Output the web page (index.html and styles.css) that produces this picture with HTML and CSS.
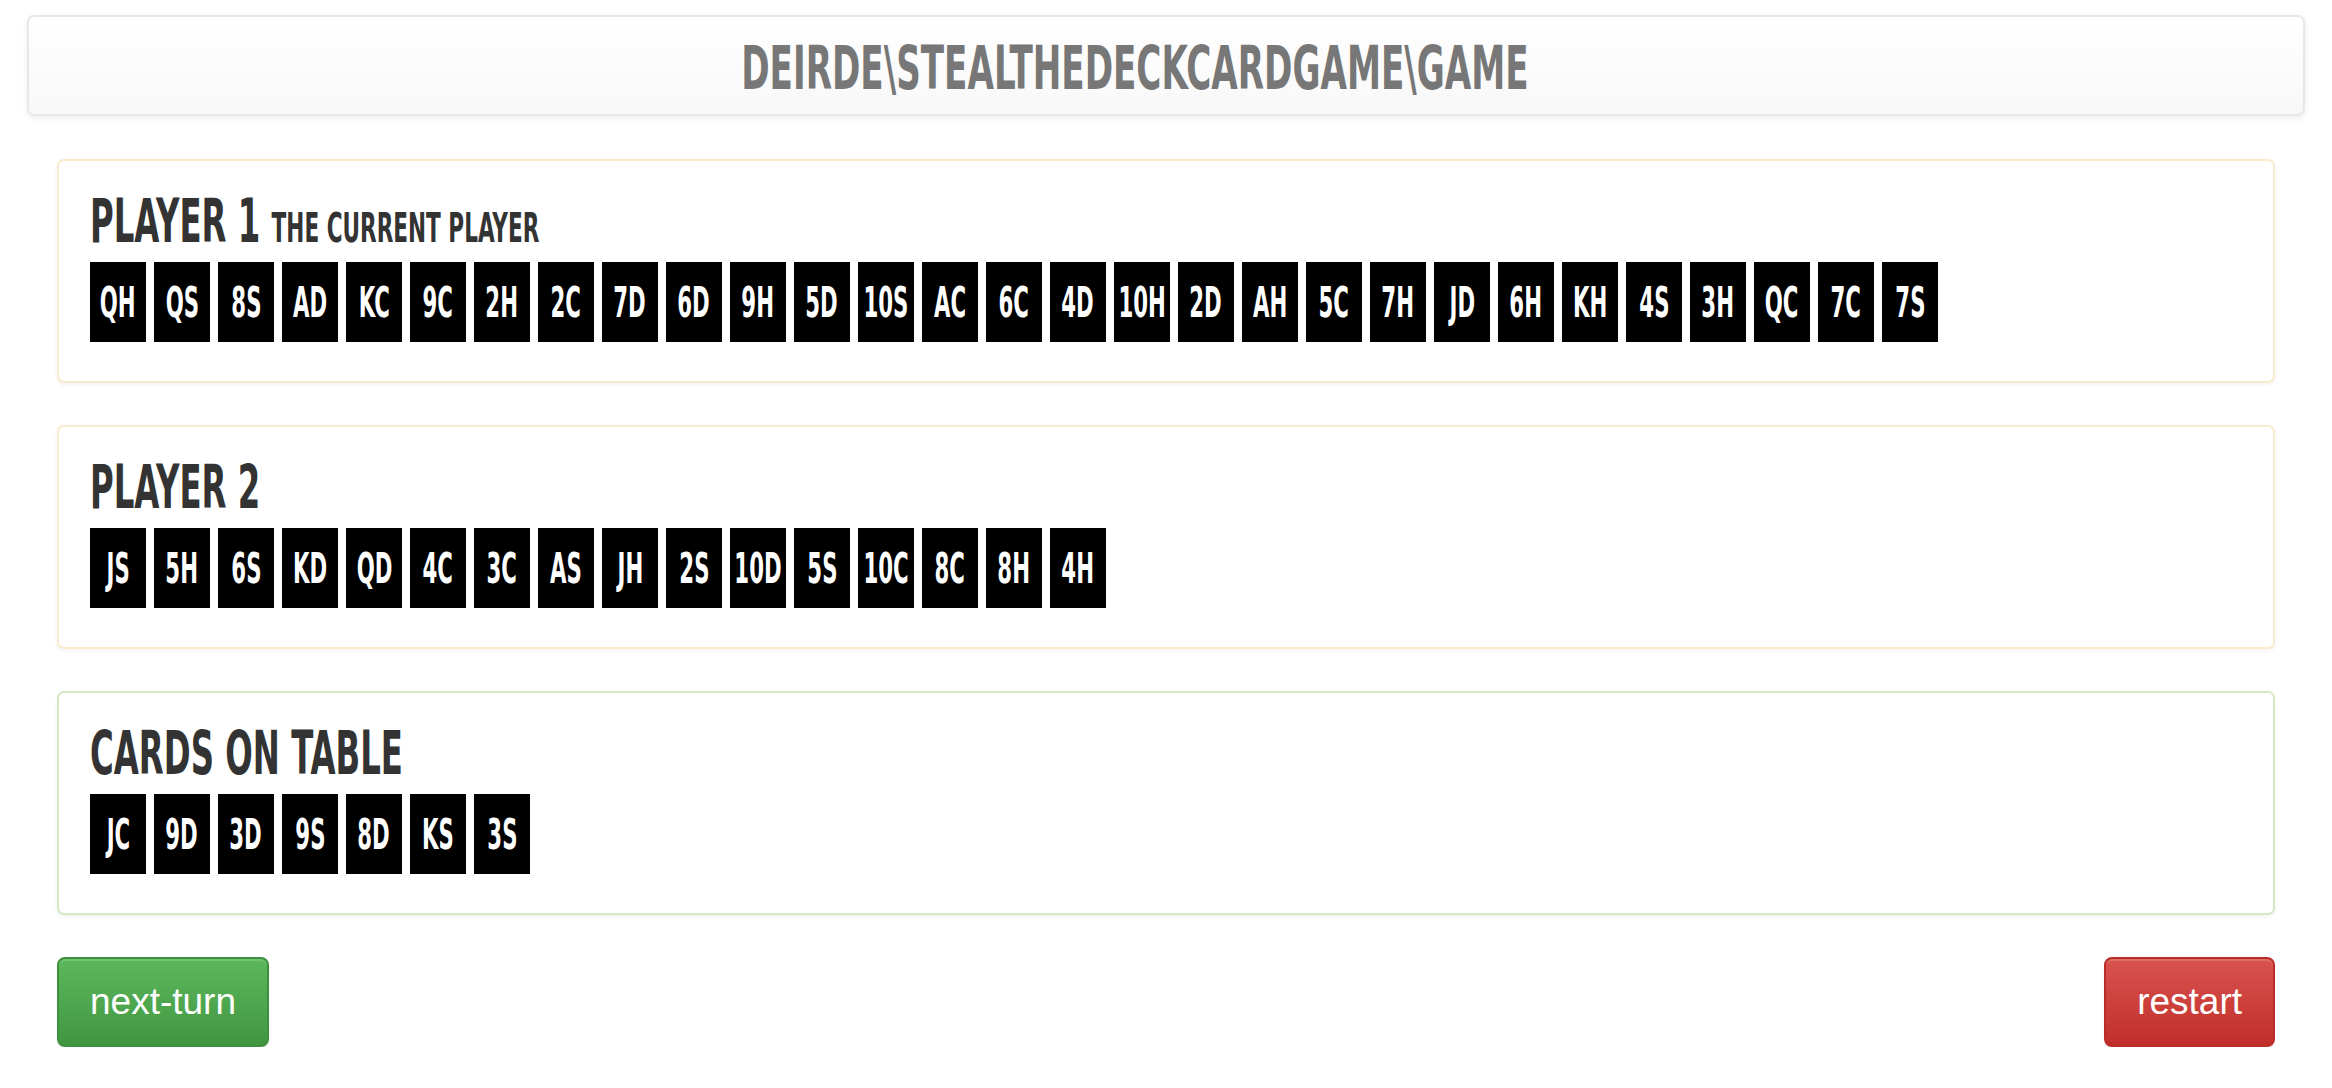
FILE: index.html
```html
<!DOCTYPE html>
<html>
<head>
<meta charset="utf-8">
<title>Steal the deck</title>
<link rel="stylesheet" href="styles.css">
</head>
<body>
<div class="navbar"><span class="brand">DEIRDE\STEALTHEDECKCARDGAME\GAME</span></div>
<div class="main">
  <div class="panel panel-warning">
    <h2 class="ptitle"><span class="cond">PLAYER 1 <small>THE CURRENT PLAYER</small></span></h2>
    <div class="cards">
      <div class="card"><span>QH</span></div><div class="card"><span>QS</span></div><div class="card"><span>8S</span></div><div class="card"><span>AD</span></div><div class="card"><span>KC</span></div><div class="card"><span>9C</span></div><div class="card"><span>2H</span></div><div class="card"><span>2C</span></div><div class="card"><span>7D</span></div><div class="card"><span>6D</span></div><div class="card"><span>9H</span></div><div class="card"><span>5D</span></div><div class="card"><span>10S</span></div><div class="card"><span>AC</span></div><div class="card"><span>6C</span></div><div class="card"><span>4D</span></div><div class="card"><span>10H</span></div><div class="card"><span>2D</span></div><div class="card"><span>AH</span></div><div class="card"><span>5C</span></div><div class="card"><span>7H</span></div><div class="card"><span>JD</span></div><div class="card"><span>6H</span></div><div class="card"><span>KH</span></div><div class="card"><span>4S</span></div><div class="card"><span>3H</span></div><div class="card"><span>QC</span></div><div class="card"><span>7C</span></div><div class="card"><span>7S</span></div>
    </div>
  </div>
  <div class="panel panel-warning">
    <h2 class="ptitle"><span class="cond">PLAYER 2</span></h2>
    <div class="cards">
      <div class="card"><span>JS</span></div><div class="card"><span>5H</span></div><div class="card"><span>6S</span></div><div class="card"><span>KD</span></div><div class="card"><span>QD</span></div><div class="card"><span>4C</span></div><div class="card"><span>3C</span></div><div class="card"><span>AS</span></div><div class="card"><span>JH</span></div><div class="card"><span>2S</span></div><div class="card"><span>10D</span></div><div class="card"><span>5S</span></div><div class="card"><span>10C</span></div><div class="card"><span>8C</span></div><div class="card"><span>8H</span></div><div class="card"><span>4H</span></div>
    </div>
  </div>
  <div class="panel panel-success">
    <h2 class="ptitle"><span class="cond">CARDS ON TABLE</span></h2>
    <div class="cards">
      <div class="card"><span>JC</span></div><div class="card"><span>9D</span></div><div class="card"><span>3D</span></div><div class="card"><span>9S</span></div><div class="card"><span>8D</span></div><div class="card"><span>KS</span></div><div class="card"><span>3S</span></div>
    </div>
  </div>
  <div class="actions">
    <button class="btn btn-success">next-turn</button>
    <button class="btn btn-danger">restart</button>
  </div>
</div>
</body>
</html>
```
FILE: styles.css
```css
html, body {
  margin: 0;
  padding: 0;
  background: #fff;
}
body {
  font-family: "DejaVu Sans Condensed", "Liberation Sans", sans-serif;
  color: #333;
}
.navbar {
  margin: 15px 27px 0;
  height: 101px;
  box-sizing: border-box;
  border: 2px solid #e7e7e7;
  border-radius: 7px;
  background: linear-gradient(to bottom, #ffffff 0%, #f8f8f8 100%);
  box-shadow: inset 0 1px 0 rgba(255,255,255,.15), 0 2px 6px rgba(0,0,0,.08);
  display: flex;
  align-items: center;
  justify-content: center;
}
.brand {
  display: inline-block;
  font-size: 60px;
  line-height: 60px;
  font-weight: bold;
  color: #777;
  transform: scaleX(0.633);
  transform-origin: center;
  white-space: nowrap;
  margin-top: 4px;
  margin-right: 62px;
}
.main {
  padding: 43px 57px 0;
  display: flex;
  flex-direction: column;
  gap: 42px;
}
.panel {
  height: 224px;
  box-sizing: border-box;
  border: 2px solid #faebcc;
  border-radius: 7px;
  background: #fff;
  box-shadow: 0 2px 4px rgba(0,0,0,.05);
  padding: 30px 31px 39px;
}
.panel-success {
  border-color: #d6e9c6;
}
.ptitle {
  margin: 0 0 10px;
  height: 61px;
  font-size: 60px;
  line-height: 61px;
  font-weight: bold;
  color: #333;
  white-space: nowrap;
}
.cond {
  display: inline-block;
  transform: scaleX(0.60);
  transform-origin: left center;
}
.ptitle small {
  font-size: 40px;
  line-height: 1;
  color: #333;
}
.cards {
  display: flex;
  gap: 8px;
}
.card {
  width: 56px;
  height: 80px;
  background: #000;
  color: #fff;
  display: flex;
  align-items: center;
  justify-content: center;
  flex: none;
}
.card span {
  display: inline-block;
  font-weight: bold;
  font-size: 43px;
  line-height: 44px;
  transform: scaleX(0.55);
  white-space: nowrap;
}
.actions {
  display: flex;
  justify-content: space-between;
}
.btn {
  height: 90px;
  box-sizing: border-box;
  padding: 0 31px;
  border: 2px solid;
  border-radius: 8px;
  font-family: "Liberation Sans", Arial, sans-serif;
  font-size: 37px;
  color: #fff;
  box-shadow: inset 0 2px 0 rgba(255,255,255,.15), 0 2px 2px rgba(0,0,0,.075);
  cursor: pointer;
}
.btn-success {
  background: linear-gradient(to bottom, #5cb85c 0%, #419641 100%);
  border-color: #3e8f3e;
}
.btn-danger {
  background: linear-gradient(to bottom, #d9534f 0%, #c12e2a 100%);
  border-color: #b92c28;
}
```
